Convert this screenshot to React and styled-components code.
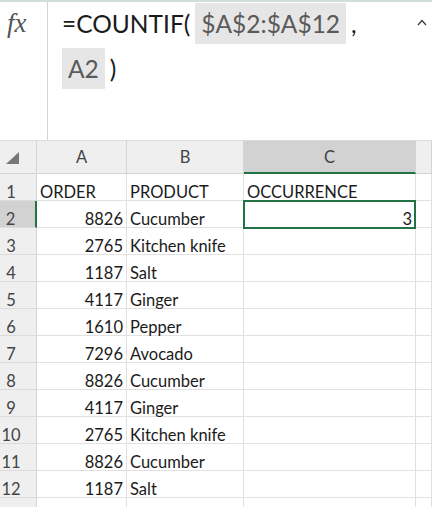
import styled, { createGlobalStyle } from "styled-components";

const GREEN = "#217346";
const COLS = "37px 90px 117px 172px 1fr";

const GlobalStyle = createGlobalStyle`
  html, body {
    margin: 0;
    padding: 0;
    background: #fff;
    overflow: hidden;
  }
  body {
    font-family: Lato, "Open Sans", sans-serif;
    color: #1b1b1b;
  }
  * {
    box-sizing: border-box;
  }
`;

// Formula bar
const FormulaBar = styled.div`
  display: flex;
  height: 140px;
  border-top: 2px solid #d3ddda;
`;

const FxBox = styled.div`
  width: 48px;
  border-right: 1px solid #d4d4d4;
  padding: 6px 0 0 7px;
  font-family: "Liberation Serif", serif;
  font-style: italic;
  font-size: 27px;
  line-height: 30px;
  color: #555;
`;

const FormulaText = styled.div`
  flex: 1;
  display: flex;
  flex-direction: column;
  gap: 4px;
  padding: 1px 0 0 14px;
  font-size: 24.5px;
`;

const FormulaLine = styled.div`
  display: flex;
  align-items: center;
  gap: 5px;
  height: 41px;
`;

const Token = styled.span`
  display: inline-flex;
  align-items: center;
  height: 41px;
  padding: ${(p) => (p.$ref ? "0 6px" : "0")};
  background: ${(p) => (p.$ref ? "#e6e6e6" : "transparent")};
  color: ${(p) => (p.$ref ? "#5a5a5a" : "#1b1b1b")};
`;

const Caret = styled.div`
  display: flex;
  align-items: flex-start;
  width: 36px;
  padding: 17px 0 0 21px;
`;

// Grid
const Sheet = styled.div`
  display: flex;
  flex-direction: column;
`;

const Row = styled.div`
  display: grid;
  grid-template-columns: ${COLS};
  height: ${(p) => (p.$header ? "34px" : "27px")};
`;

const Corner = styled.div`
  display: flex;
  align-items: flex-end;
  padding: 0 0 9px 6px;
  background: #efefef;
  border-top: 1px solid #dcdcdc;
  border-right: 1px solid #d4d4d4;
  border-bottom: 1px solid #d4d4d4;
`;

const ColHead = styled.div`
  display: flex;
  align-items: center;
  justify-content: center;
  font-size: 16.5px;
  color: #444;
  background: ${(p) => (p.$active ? "#d2d2d2" : "#efefef")};
  border-top: 1px solid #dcdcdc;
  border-right: 1px solid #d4d4d4;
  border-bottom: ${(p) => (p.$active ? `2px solid ${GREEN}` : "1px solid #d4d4d4")};
`;

const RowHead = styled.div`
  display: flex;
  align-items: flex-end;
  justify-content: center;
  padding-right: 14px;
  font-size: 16.5px;
  line-height: 16px;
  color: #444;
  background: ${(p) => (p.$active ? "#d2d2d2" : "#efefef")};
  border-right: ${(p) => (p.$active ? `2px solid ${GREEN}` : "1px solid #d4d4d4")};
  border-bottom: 1px solid #dcdcdc;
`;

const Cell = styled.div`
  position: relative;
  display: flex;
  align-items: flex-end;
  justify-content: ${(p) => (p.$right ? "flex-end" : "flex-start")};
  padding: 0 3px;
  font-size: 16.5px;
  line-height: 16px;
  white-space: nowrap;
  color: #1b1b1b;
  border-right: 1px solid #e1e1e1;
  border-bottom: 1px solid #e1e1e1;

  ${(p) =>
    p.$selected &&
    `
    &::after {
      content: "";
      position: absolute;
      top: -1px;
      left: -1px;
      right: -1px;
      bottom: -2px;
      border: 2px solid ${GREEN};
      z-index: 1;
    }
  `}
`;

const rows = [
  ["ORDER", "PRODUCT", "OCCURRENCE"],
  [8826, "Cucumber", 3],
  [2765, "Kitchen knife", ""],
  [1187, "Salt", ""],
  [4117, "Ginger", ""],
  [1610, "Pepper", ""],
  [7296, "Avocado", ""],
  [8826, "Cucumber", ""],
  [4117, "Ginger", ""],
  [2765, "Kitchen knife", ""],
  [8826, "Cucumber", ""],
  [1187, "Salt", ""],
  ["", "", ""],
];

const App = () => {
  return (
    <>
      <GlobalStyle />
      <FormulaBar>
        <FxBox>fx</FxBox>
        <FormulaText>
          <FormulaLine>
            <Token>=COUNTIF(</Token>
            <Token $ref>$A$2:$A$12</Token>
            <Token>,</Token>
          </FormulaLine>
          <FormulaLine>
            <Token $ref>A2</Token>
            <Token>)</Token>
          </FormulaLine>
        </FormulaText>
        <Caret>
          <svg width="10" height="7" viewBox="0 0 10 7">
            <polyline
              points="1,6 5,1.5 9,6"
              fill="none"
              stroke="#3c3c3c"
              strokeWidth="1.3"
            />
          </svg>
        </Caret>
      </FormulaBar>

      <Sheet>
        <Row $header>
          <Corner>
            <svg width="13" height="12" viewBox="0 0 13 12">
              <polygon points="13,0 13,12 0,12" fill="#767676" />
            </svg>
          </Corner>
          <ColHead>A</ColHead>
          <ColHead>B</ColHead>
          <ColHead $active>C</ColHead>
          <ColHead />
        </Row>
        {rows.map((r, i) => (
          <Row key={i}>
            <RowHead $active={i === 1}>{i < 12 ? i + 1 : ""}</RowHead>
            <Cell $right={typeof r[0] === "number"}>{r[0]}</Cell>
            <Cell>{r[1]}</Cell>
            <Cell $right={typeof r[2] === "number"} $selected={i === 1}>
              {r[2]}
            </Cell>
            <Cell />
          </Row>
        ))}
      </Sheet>
    </>
  );
};

export default App;
